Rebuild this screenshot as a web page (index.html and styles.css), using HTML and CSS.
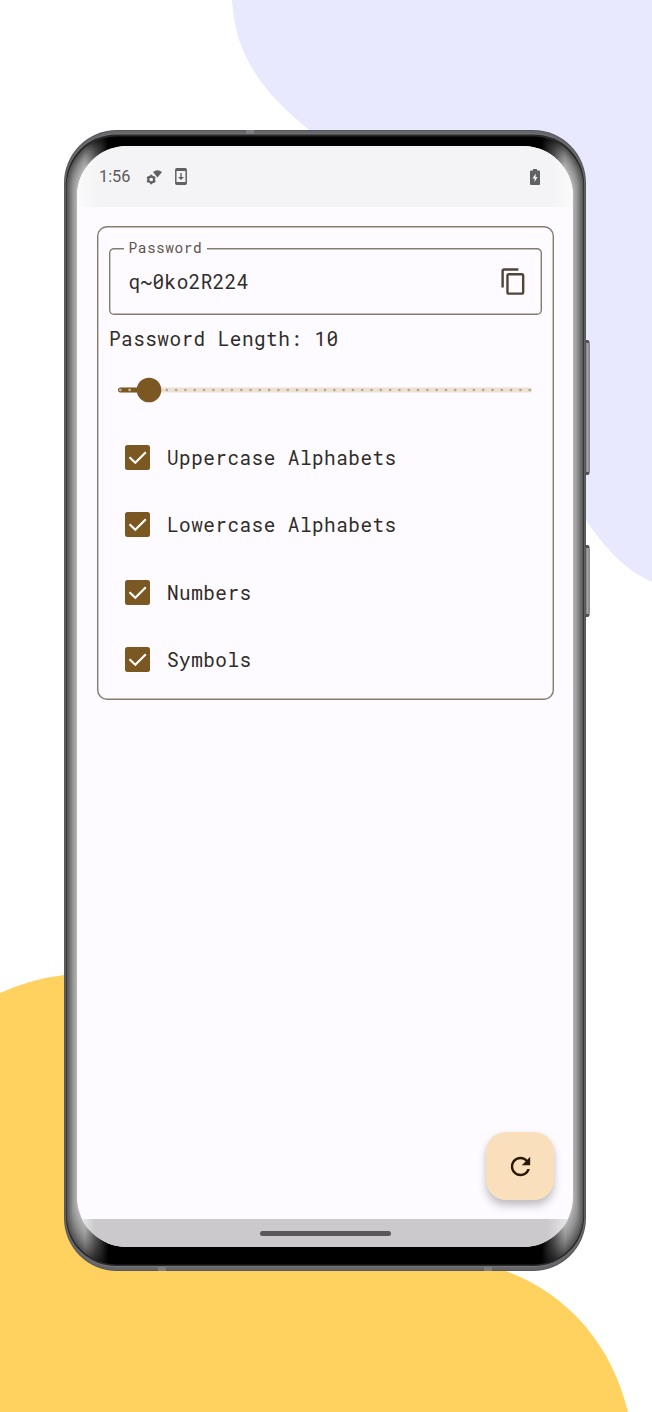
FILE: index.html
```html
<!DOCTYPE html>
<html lang="en">
<head>
<meta charset="utf-8">
<title>Password Generator</title>
<link rel="stylesheet" href="styles.css">
</head>
<body>
<main class="stage">
  <svg class="backdrop" viewBox="0 0 652 1412" aria-hidden="true">
    <path fill="#e8e8fe" d="M232 0C235 56 262 91 309 130L420 280L586 520C604 547 626 571 652 582V0Z"/>
    <path fill="#ffd25f" d="M0 993Q31 979 64 975L300 1100L506 1271C568 1294 612 1345 628 1412H0Z"/>
    <defs>
      <linearGradient id="fade" gradientUnits="userSpaceOnUse" x1="64" x2="586" y1="0" y2="0">
        <stop offset="0" stop-color="#fff"/><stop offset=".04" stop-color="#fff"/><stop offset=".06" stop-color="#777"/><stop offset=".085" stop-color="#000"/>
        <stop offset=".915" stop-color="#000"/><stop offset=".94" stop-color="#777"/><stop offset=".96" stop-color="#fff"/><stop offset="1" stop-color="#fff"/>
      </linearGradient>
      <linearGradient id="key" x1="0" x2="1" y1="0" y2="0">
        <stop offset="0" stop-color="#68686c"/><stop offset=".6" stop-color="#a8a7ac"/><stop offset="1" stop-color="#77767a"/>
      </linearGradient>
      <mask id="sides"><rect width="652" height="1412" fill="url(#fade)"/></mask>
    </defs>
    <rect x="582" y="340" width="7.5" height="135" rx="2" fill="#505052"/>
    <rect x="585" y="343" width="4.5" height="129" fill="url(#key)"/>
    <rect x="582" y="545" width="7.5" height="72" rx="2" fill="#505052"/>
    <rect x="585" y="548" width="4.5" height="66" fill="url(#key)"/>
    <rect x="64" y="130" width="522" height="1141" rx="53" fill="#58585b"/>
    <rect x="65" y="131" width="520" height="1139" rx="52" fill="#67676b"/>
    <rect x="65.5" y="133.500" width="519" height="1133.500" rx="51" fill="#77777a"/>
    <rect x="65.800" y="134.500" width="518.400" height="1131.500" rx="50" fill="#29292a"/>
    <path fill="#7d7d82" d="M246 130h8v4h-8zM158 1267h8v4h-8zM484 1267h8v4h-8z"/>
    <rect x="66.600" y="136.500" width="516.800" height="1128" rx="50" fill="#000"/>
    <g mask="url(#sides)">
      <rect x="66.500" y="136.500" width="517" height="1128" rx="50" fill="#585858"/>
      <rect x="68" y="138" width="514" height="1124.500" rx="50" fill="#666"/>
      <rect x="69.300" y="139" width="511.400" height="1121.500" rx="49.500" fill="#747474"/>
      <rect x="70.600" y="140" width="508.800" height="1118" rx="49" fill="#838383"/>
      <rect x="71.900" y="141.200" width="506.200" height="1114.500" rx="49" fill="#919191"/>
      <rect x="73.200" y="142.500" width="503.600" height="1111" rx="49" fill="#9c9c9c"/>
      <rect x="74.500" y="143.800" width="501" height="1107" rx="49" fill="#a7a7a7"/>
      <rect x="75.800" y="145" width="498.400" height="1103" rx="49" fill="#b2b2b2"/>
    </g>
  </svg>

  <section class="screen">
    <header class="status">
      <span class="clock">1:56</span>
      <svg class="signal" viewBox="0 0 16 16">
        <path fill="#606163" d="M7 3Q11.5-.6 16 3L11.5 8.4Z"/>
        <circle cx="5.2" cy="10.5" r="2.9" fill="none" stroke="#606163" stroke-width="2.1"/>
        <path stroke="#606163" stroke-width="2.2" d="M5.2 5.8v2M5.2 13.2v2M1.1 8.1l1.8 1.1M7.5 11.8l1.8 1.1M1.1 12.9l1.8-1.1M7.5 9.2l1.8-1.1"/>
      </svg>
      <svg class="download" viewBox="0 0 12 17">
        <rect x=".8" y=".8" width="10.4" height="15.4" rx="1" fill="none" stroke="#606163" stroke-width="1.5"/>
        <path fill="#606163" d="M1 1h10v2H1zM1 14h10v2H1zM5.3 5h1.4v4H9l-3 3-3-3h2.3z"/>
      </svg>
      <svg class="battery" viewBox="0 0 10 16">
        <path fill="#606163" d="M3 0h4v1.5h2q1 0 1 1V15q0 1-1 1H1q-1 0-1-1V2.500q0-1 1-1h2z"/>
        <path fill="#f4f4f6" d="M5.600 4.500 2.500 9.500H4.600V13L7.500 8H5.600z"/>
      </svg>
    </header>

    <div class="content">
      <section class="card">
        <div class="field">
          <span class="label">Password</span>
          <span class="value">q~0ko2R224</span>
          <svg class="copy" viewBox="0 0 24 24"><path fill="#4f4539" d="M16 1H4c-1.100 0-2 .9-2 2v14h2V3h12V1zm3 4H8c-1.100 0-2 .9-2 2v14c0 1.100.9 2 2 2h11c1.100 0 2-.9 2-2V7c0-1.100-.9-2-2-2zm0 16H8V7h11v14z"/></svg>
        </div>
        <p class="length">Password Length: 10</p>
        <svg class="slider" viewBox="0 0 416 26">
          <path d="M3.500 13H412.500" stroke="#eee0d3" stroke-width="5" stroke-linecap="round"/>
          <path d="M3.500 13H31" stroke="#7b5822" stroke-width="5" stroke-linecap="round"/>
          <path d="M3.300 13H414" stroke="#b1a498" stroke-width="2.600" stroke-linecap="round" stroke-dasharray="0 9.305"/>
          <path d="M3.300 13H20" stroke="#cdb28a" stroke-width="2.400" stroke-linecap="round" stroke-dasharray="0 9.305"/>
          <circle cx="32" cy="13" r="12.300" fill="#7b5822"/>
        </svg>
        <div class="options">
          <div class="option"><svg class="box" viewBox="0 0 25 25"><rect width="25" height="25" rx="2.500" fill="#7b5822"/><path d="M4.500 12.300 10.300 17.800 20.800 7.200" fill="none" stroke="#fff" stroke-width="2.200"/></svg><span>Uppercase Alphabets</span></div>
          <div class="option"><svg class="box" viewBox="0 0 25 25"><rect width="25" height="25" rx="2.500" fill="#7b5822"/><path d="M4.500 12.300 10.300 17.800 20.800 7.200" fill="none" stroke="#fff" stroke-width="2.200"/></svg><span>Lowercase Alphabets</span></div>
          <div class="option"><svg class="box" viewBox="0 0 25 25"><rect width="25" height="25" rx="2.500" fill="#7b5822"/><path d="M4.500 12.300 10.300 17.800 20.800 7.200" fill="none" stroke="#fff" stroke-width="2.200"/></svg><span>Numbers</span></div>
          <div class="option"><svg class="box" viewBox="0 0 25 25"><rect width="25" height="25" rx="2.500" fill="#7b5822"/><path d="M4.500 12.300 10.300 17.800 20.800 7.200" fill="none" stroke="#fff" stroke-width="2.200"/></svg><span>Symbols</span></div>
        </div>
      </section>
      <div class="fab">
        <svg viewBox="0 0 24 24"><path fill="#291800" d="M17.650 6.350C16.200 4.900 14.210 4 12 4c-4.420 0-7.990 3.580-7.990 8s3.570 8 7.990 8c3.730 0 6.840-2.550 7.730-6h-2.080c-.82 2.330-3.040 4-5.650 4-3.310 0-6-2.690-6-6s2.690-6 6-6c1.660 0 3.140.69 4.220 1.780L13 11h7V4l-2.350 2.350z"/></svg>
      </div>
    </div>
    <footer class="navbar"><span class="pill"></span></footer>
  </section>
</main>
</body>
</html>
```

FILE: styles.css
```css
* { box-sizing: border-box; }
body { margin: 0; background: #fff; }
.stage {
  position: relative;
  width: 652px;
  height: 1412px;
  overflow: hidden;
  padding: 146px 79px 165px 77px;
  font-family: "Roboto Mono", "DejaVu Sans Mono", monospace;
  font-size: 19.4px;
  letter-spacing: .45px;
  color: #302c28;
}
.backdrop { position: absolute; inset: 0; width: 652px; height: 1412px; }
.screen {
  position: relative;
  width: 496px;
  height: 1101px;
  display: flex;
  flex-direction: column;
  overflow: hidden;
  border-radius: 50px;
  background: #fdfbff;
}
.status {
  height: 61px;
  display: flex;
  align-items: center;
  padding: 0 33px 0 22px;
  background: linear-gradient(90deg, #fafafb, #f4f4f6 22px, #f4f4f6 474px, #fafafb);
}
.clock {
  width: 47px;
  font: 400 16.3px/20px Roboto, sans-serif;
  letter-spacing: 0;
  color: #58595b;
}
.signal { width: 16px; height: 16px; }
.download { width: 12px; height: 17px; margin-left: 13px; }
.battery { width: 10px; height: 16px; margin-left: auto; }
.content {
  flex: 1;
  display: flex;
  flex-direction: column;
  justify-content: space-between;
  padding: 19px 19px 19px 20px;
}
.card {
  width: 457px;
  height: 474px;
  padding: 21.5px 12px 0 11.5px;
  border-radius: 10px;
  box-shadow: inset 0 0 0 1.4px #857b6d;
}
.field {
  position: relative;
  height: 67.5px;
  padding: 0 14px 0 20px;
  border-radius: 5px;
  box-shadow: inset 0 0 0 1.4px #857b6d;
  display: flex;
  align-items: center;
  justify-content: space-between;
}
/* Floating label sits over the outline and breaks it */
.label {
  position: absolute;
  left: 15px;
  top: -10px;
  padding: 0 5px;
  background: #fdfbff;
  font-size: 14.5px;
  line-height: 20px;
  letter-spacing: .5px;
  color: #5c5349;
}
.value { letter-spacing: .4px; }
.copy { width: 29px; height: 29px; }
.length { margin: 9px 0 0 .5px; line-height: 30px; }
.slider { display: block; width: 416px; height: 26px; margin: 22.5px 0 0 8.5px; }
.options { margin-top: 21px; }
.option { height: 67.5px; display: flex; align-items: center; gap: 17px; padding-left: 16.5px; }
.box { width: 25px; height: 25px; }
.fab {
  width: 68px;
  height: 68px;
  align-self: flex-end;
  display: flex;
  align-items: center;
  justify-content: center;
  border-radius: 20px;
  background: #fadfbc;
  box-shadow: 0 6px 9px rgba(0, 0, 0, .22), 0 1px 5px rgba(0, 0, 0, .05);
}
.fab svg { width: 29px; height: 29px; }
.navbar {
  height: 28px;
  display: flex;
  align-items: center;
  justify-content: center;
  background: linear-gradient(90deg, #e8e8e9 5px, #cbc9cc 18px, #cbc9cc 470px, #e8e8e9 492px);
}
.pill { width: 131px; height: 5px; border-radius: 3px; background: #59575a; }
```
